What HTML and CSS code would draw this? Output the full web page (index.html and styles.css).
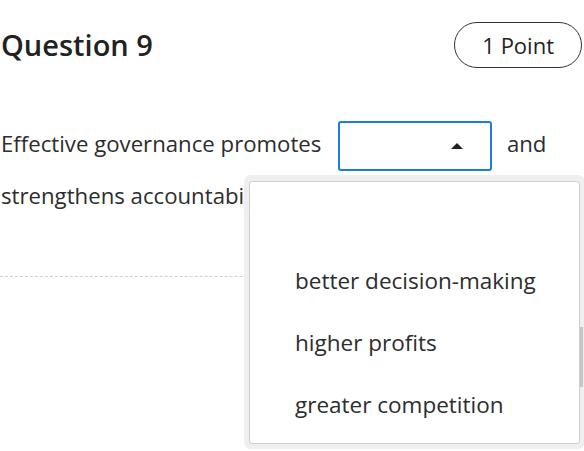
FILE: index.html
```
<!DOCTYPE html>
<html>
<head>
<meta charset="utf-8">
<link rel="stylesheet" href="styles.css">
</head>
<body>
<div class="question">
  <div class="header">
    <h2 class="title">Question 9</h2>
    <span class="points">1 Point</span>
  </div>
  <p class="prompt">Effective governance promotes <span class="select"><svg class="arrow" width="12" height="6" viewBox="0 0 12 6"><path d="M0 6 L6 0 L12 6 Z" fill="#222"/></svg></span> and strengthens accountability.</p>
  <div class="separator"></div>
  <div class="dropdown">
    <ul class="options">
      <li class="option"></li>
      <li class="option">better decision-making</li>
      <li class="option">higher profits</li>
      <li class="option">greater competition</li>
    </ul>
    <div class="thumb"></div>
  </div>
</div>
</body>
</html>
```
FILE: styles.css
```
html, body {
  margin: 0;
  padding: 0;
  background: #fff;
  overflow: hidden;
}
body {
  font-family: "Open Sans", "Liberation Sans", sans-serif;
  color: #2d2d2d;
  width: 584px;
  height: 451px;
}
.question {
  position: relative;
  padding: 22px 2px 0 1px;
}
.header {
  display: flex;
  justify-content: space-between;
  align-items: center;
}
.title {
  margin: 0;
  font-size: 29px;
  font-weight: 600;
  color: #222;
  line-height: 46px;
}
.points {
  box-sizing: border-box;
  height: 46px;
  padding: 0 27px;
  border: 1px solid #333;
  border-radius: 23px;
  font-size: 22px;
  font-weight: 500;
  line-height: 44px;
  color: #222;
}
.prompt {
  margin: 51px 0 0 0;
  font-size: 22.2px;
  line-height: 50px;
  width: 570px;
}
.select {
  display: inline-block;
  box-sizing: border-box;
  width: 154px;
  height: 50px;
  margin: 0 9px 0 11px;
  border: 2px solid #1a7ce0;
  border-radius: 3px;
  vertical-align: middle;
  position: relative;
}
.arrow {
  position: absolute;
  right: 27px;
  top: 20px;
}
.separator {
  margin-top: 55px;
  margin-left: -1px;
  border-top: 1px dashed #d0d0d0;
}
.dropdown {
  position: absolute;
  left: 244px;
  top: 175px;
  width: 341px;
  height: 274px;
  box-sizing: border-box;
  padding: 6px 5px 5px 5px;
  background: #efefef;
  border-radius: 7px;
}
.options {
  list-style: none;
  margin: 0;
  box-sizing: border-box;
  height: 100%;
  padding: 6px 0 6px 0;
  background: #fff;
  border: 1px solid #cfcfcf;
  border-radius: 3px;
}
.option {
  height: 62px;
  line-height: 62px;
  padding-left: 45px;
  font-size: 22.5px;
  color: #2d2d2d;
}
.thumb {
  position: absolute;
  left: 336px;
  top: 152px;
  width: 3px;
  height: 60px;
  background: #c6c6c6;
}
```
